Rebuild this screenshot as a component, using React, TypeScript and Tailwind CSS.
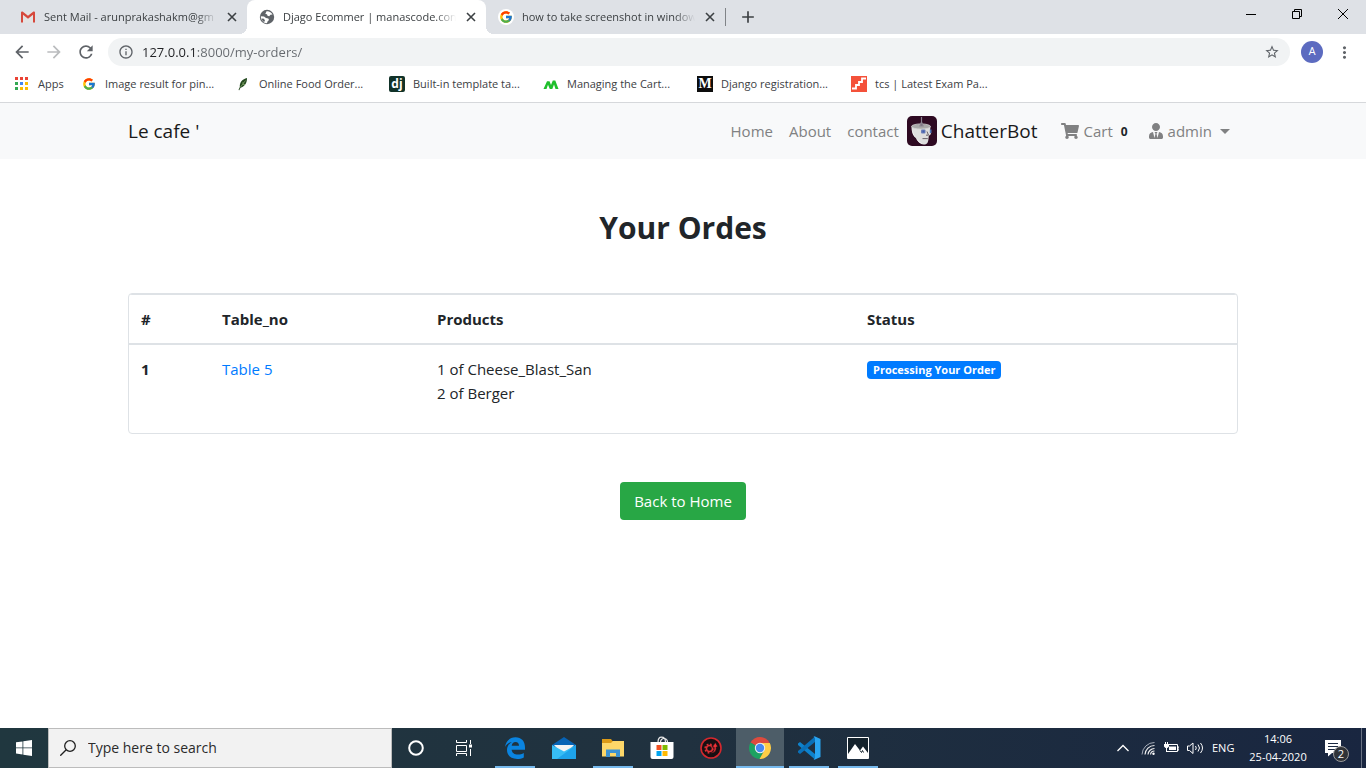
import React from "react";
import { FaShoppingCart, FaUserTie } from "react-icons/fa";
import { FcGoogle } from "react-icons/fc";
import {
  MdAdd,
  MdArrowBack,
  MdArrowForward,
  MdInfoOutline,
  MdMoreVert,
  MdRefresh,
  MdStarBorder,
} from "react-icons/md";

function GmailIcon() {
  return (
    <svg width="16" height="16" viewBox="0 0 16 16" aria-hidden="true">
      <path d="M2.5 3h11v10.500h-11z" fill="#e3e3e3" />
      <path d="M1 3.500Q1 2.500 2 2.500h.6L8 6.800l5.400-4.300h.6q1 0 1 1V13.500h-2V5.800L8 9.800 3 5.800v7.700H1z" fill="#d6483c" />
    </svg>
  );
}

function GlobeIcon() {
  return (
    <svg width="16" height="16" viewBox="0 0 16 16" aria-hidden="true">
      <circle cx="8" cy="8" r="7.200" fill="#5f6368" />
      <path d="M7.500 2.200C10 1.800 12.500 3.200 13.500 5.500l-2 .3-1.300 1.400-1.700-.4-.5-1.500-1.700-.3z" fill="#fff" />
      <path d="M1.800 7.200 5 7.400l2 1.600 2.300.4.700 1.600-1.500 1.500-.5 1.800C4.500 14 1.800 11 1.800 7.200z" fill="#fff" />
      <path d="m2.500 9.500 2.500.3 1 2-1 1.200C3.500 12 2.700 10.800 2.500 9.500z" fill="#5f6368" />
    </svg>
  );
}

function GoogleBadge() {
  return (
    <span className="flex size-4 items-center justify-center rounded-full bg-white">
      <FcGoogle size={14} />
    </span>
  );
}

function AppsGridIcon() {
  const colors = [
    ["#ea4335", "#ea4335", "#ea4335"],
    ["#34a853", "#4285f4", "#fbbc04"],
    ["#34a853", "#fbbc04", "#fbbc04"],
  ];
  return (
    <svg width="14" height="14" viewBox="0 0 14 14" aria-hidden="true">
      {colors.map((row, r) =>
        row.map((c, i) => <rect key={`${r}-${i}`} x={1 + i * 5} y={r * 5} width="3" height="3" fill={c} />)
      )}
    </svg>
  );
}

function LeafIcon() {
  return (
    <svg width="16" height="16" viewBox="0 0 16 16" aria-hidden="true">
      <path d="M12 2C7.500 3 4.500 6 4.800 11l-1.300 3 .8.300 1.200-2.600C9.500 10.500 12 7.500 12 2z" fill="#24491f" />
      <path d="M10.500 4.500 5.500 11M8 6v2.500h2" stroke="#86ad6c" strokeWidth="0.7" fill="none" />
    </svg>
  );
}

function DjangoIcon() {
  return (
    <span className="flex size-4 items-center justify-center rounded-xs bg-[#113228] pb-px text-xs leading-none font-bold text-white">
      dj
    </span>
  );
}

function PeaksIcon() {
  return (
    <svg width="16" height="16" viewBox="0 0 16 16" aria-hidden="true">
      <path d="M.5 13 4 5.200h2.500L8 9l1.800-4.600h2.500L15.500 13h-3L11 8.500 9.300 13H6.800L5 8.800 3.500 13z" fill="#1fbf2c" />
    </svg>
  );
}

function MediumIcon() {
  return (
    <span className="flex size-4 items-center justify-center bg-[#0d0d0d] font-['Liberation_Serif',serif] text-sm leading-none font-bold text-white">
      M
    </span>
  );
}

function StepsIcon() {
  return (
    <svg width="16" height="16" viewBox="0 0 16 16" aria-hidden="true">
      <path d="M0 0h16v16H0z" fill="#f4513a" />
      <path d="M1 12.500h4v-3.500h3v-3h3v-3.500h4" stroke="#fff" strokeWidth="1.800" fill="none" />
    </svg>
  );
}

function BotIcon() {
  return (
    <svg width="30" height="30" viewBox="0 0 30 30" aria-hidden="true">
      <rect width="30" height="30" rx="5" fill="#2e0a22" />
      <path d="M4.500 10.500c0 7 2.200 9.500 4.300 11.500 1.800 3.700 4.500 6.300 7.700 6.600 3.400.2 4.600-2.100 4.900-5.100l.4-3.500 2.200-2-1-3 .5-4.500z" fill="#dedede" />
      <path d="M5.500 13c.5 6 4.500 11.500 10 14.500-3.500 0-5-3-6.500-5.500C6.500 20 5 17.500 5.500 13z" fill="#f4f4f4" />
      <ellipse cx="14" cy="10.500" rx="9.500" ry="2.600" fill="#a8a8a8" stroke="#d2d2d2" strokeWidth="0.800" />
      <path d="M14.500 1v5M14.500 6l-1.500 4h3z" stroke="#8b8490" strokeWidth="1.200" fill="#77717a" />
      <rect x="14" y="13.500" width="4.500" height="4" rx="1" fill="#6d7fb8" />
      <path d="M15.500 14.500h2v2h-2z" fill="#3f5fb0" />
      <path d="M22.800 13.500h1.700v3.500h-1.700z" fill="#4d74b5" />
      <path d="m20 15.500 1.500 3.700h-2.500M15.500 22.600h5.300" stroke="#5a555e" strokeWidth="0.900" fill="none" />
    </svg>
  );
}

const tabs = [
  { title: "Sent Mail - arunprakashakm@gm", icon: <GmailIcon />, active: false },
  { title: "Djago Ecommer | manascode.con", icon: <GlobeIcon />, active: true },
  { title: "how to take screenshot in window", icon: <GoogleBadge />, active: false },
];

const bookmarks = [
  { label: "Image result for pin...", icon: <FcGoogle size={14} className="mx-px" /> },
  { label: "Online Food Order...", icon: <LeafIcon /> },
  { label: "Built-in template ta...", icon: <DjangoIcon /> },
  { label: "Managing the Cart...", icon: <PeaksIcon /> },
  { label: "Django registration...", icon: <MediumIcon /> },
  { label: "tcs | Latest Exam Pa...", icon: <StepsIcon /> },
];

function TabStrip() {
  return (
    <div className="flex h-[34px] bg-[#dee1e6] pl-2">
      {tabs.map((tab) => (
        <div
          key={tab.title}
          className={
            tab.active
              ? "relative flex w-[239px] items-center gap-2 rounded-t-lg bg-white pr-2 pl-3"
              : "flex w-[239px] items-center gap-2 pr-2 pl-3"
          }
        >
          {tab.active && (
            <>
              <span className="absolute bottom-0 -left-2 size-2 bg-[radial-gradient(circle_at_0_0,#dee1e6_8px,#ffffff_8px)]" />
              <span className="absolute -right-2 bottom-0 size-2 bg-[radial-gradient(circle_at_100%_0,#dee1e6_8px,#ffffff_8px)]" />
            </>
          )}
          <span className="shrink-0">{tab.icon}</span>
          <span className="min-w-0 flex-1 text-[11px] whitespace-nowrap text-[#3c4043] [mask-image:linear-gradient(to_right,#000_88%,transparent)]">
            {tab.title}
          </span>
          <button type="button" aria-label="Close tab" className="shrink-0 text-[#3c4043]">
            <svg width="14" height="14" viewBox="0 0 14 14" aria-hidden="true">
              <path d="m3 3 8 8M11 3l-8 8" stroke="currentColor" strokeWidth="1.600" />
            </svg>
          </button>
        </div>
      ))}
      <span className="my-2 w-px bg-[#808387]" />
      <button type="button" aria-label="New tab" className="ml-3 text-[#3c4043]">
        <MdAdd size={20} />
      </button>
      <div className="ml-auto flex h-7 text-black">
        <button type="button" aria-label="Minimize" className="flex w-[46px] items-center justify-center">
          <svg width="10" height="10" viewBox="0 0 10 10"><path d="M0 5.500h10" stroke="currentColor" /></svg>
        </button>
        <button type="button" aria-label="Restore" className="flex w-[46px] items-center justify-center">
          <svg width="10" height="10" viewBox="0 0 10 10">
            <path d="M.5 2.500h7v7h-7zM2.500 2.500v-2h7v7h-2" stroke="currentColor" fill="none" />
          </svg>
        </button>
        <button type="button" aria-label="Close" className="flex w-[46px] items-center justify-center">
          <svg width="10" height="10" viewBox="0 0 10 10"><path d="m0 0 10 10M10 0 0 10" stroke="currentColor" /></svg>
        </button>
      </div>
    </div>
  );
}

function Toolbar() {
  return (
    <div className="flex h-9 items-center bg-white px-3 text-[#5f6368]">
      <div className="flex gap-3">
        <button type="button" aria-label="Back"><MdArrowBack size={20} /></button>
        <button type="button" aria-label="Forward" className="text-[#babcbe]"><MdArrowForward size={20} /></button>
        <button type="button" aria-label="Reload"><MdRefresh size={20} /></button>
      </div>
      <div className="ml-3 flex h-7 flex-1 items-center gap-2 rounded-full bg-[#f1f3f4] px-2.5">
        <MdInfoOutline size={16} />
        <input
          aria-label="Address"
          defaultValue="127.0.0.1:8000/my-orders/"
          className="min-w-0 flex-1 bg-[linear-gradient(to_right,#202124_54px,#65696e_54px)] bg-clip-text text-[13px] leading-5 text-transparent outline-none"
        />
        <button type="button" aria-label="Bookmark this page"><MdStarBorder size={16} /></button>
      </div>
      <button
        type="button"
        aria-label="Profile"
        className="ml-[11px] size-[22px] rounded-full bg-[#5c6bc0] font-[Roboto,sans-serif] text-[11px] text-white"
      >
        A
      </button>
      <button type="button" aria-label="Menu" className="ml-3"><MdMoreVert size={19} /></button>
    </div>
  );
}

function BookmarksBar() {
  return (
    <div className="flex h-[33px] items-center overflow-hidden border-b border-[#d6d8db] bg-white pb-1 pl-3.5 text-[11px] text-[#3c4043]">
      <a href="#apps" className="flex w-[67px] items-center gap-2.5">
        <AppsGridIcon />
        Apps
      </a>
      {bookmarks.map((b) => (
        <a key={b.label} href="#bookmark" className="flex w-[154px] shrink-0 items-center gap-2 whitespace-nowrap">
          <span className="shrink-0">{b.icon}</span>
          {b.label}
        </a>
      ))}
    </div>
  );
}

function SiteNav() {
  return (
    <nav className="bg-[#f8f9fa]">
      <div className="mx-auto flex h-14 max-w-[1140px] items-center px-[15px]">
        <a href="#home" className="text-[19px] text-[#1a1a1a]">Le cafe '</a>
        <div className="ml-auto flex items-center text-[15px] text-[#808182]">
          <a href="#home" className="px-2">Home</a>
          <a href="#about" className="px-2">About</a>
          <a href="#contact" className="px-2">contact</a>
          <a href="#chatterbot" className="mr-4 flex items-center gap-1 text-[19px] text-[#1a1a1a]">
            <BotIcon />
            ChatterBot
          </a>
          <a href="#cart" className="flex items-center gap-1 px-2">
            <FaShoppingCart size={18} />
            Cart
            <span className="px-1 pt-px text-xs font-bold text-[#212529]">0</span>
          </a>
          <button type="button" className="flex items-center gap-1 px-2">
            <FaUserTie size={16} />
            admin
            <span className="ml-1 border-x-5 border-t-5 border-x-transparent border-t-current" />
          </button>
        </div>
      </div>
    </nav>
  );
}

function Orders() {
  return (
    <main className="mx-auto w-full max-w-[1140px] flex-1 px-[15px] pt-12 text-[15px] leading-6 text-[#212529]">
      <h1 className="text-center text-[30px] leading-[42px] font-bold">Your Ordes</h1>
      <div className="mt-11 overflow-hidden rounded border border-[#dee2e6]">
        <table className="w-full table-fixed border-collapse text-left">
          <colgroup>
            <col className="w-[81px]" />
            <col className="w-[215px]" />
            <col className="w-[430px]" />
            <col />
          </colgroup>
          <thead>
            <tr className="border-t border-b-2 border-[#dee2e6]">
              <th scope="col" className="p-3 font-bold">#</th>
              <th scope="col" className="p-3 font-bold">Table_no</th>
              <th scope="col" className="p-3 font-bold">Products</th>
              <th scope="col" className="p-3 font-bold">Status</th>
            </tr>
          </thead>
          <tbody>
            <tr className="align-top">
              <th scope="row" className="p-3 font-bold">1</th>
              <td className="p-3"><a href="#table" className="text-[#007bff]">Table 5</a></td>
              <td className="p-3 pb-7">
                <p>1 of Cheese_Blast_San</p>
                <p>2 of Berger</p>
              </td>
              <td className="p-3">
                <span className="mt-1 inline-block rounded bg-[#007bff] px-1.5 align-top text-[11px] leading-[18px] font-bold whitespace-nowrap text-white">
                  Processing Your Order
                </span>
              </td>
            </tr>
          </tbody>
        </table>
      </div>
      <div className="mt-12 text-center">
        <a href="#home" className="inline-block rounded bg-[#28a745] px-3.5 py-[7px] text-white">Back to Home</a>
      </div>
    </main>
  );
}

function EdgeIcon() {
  return (
    <svg width="22" height="22" viewBox="0 0 22 22" aria-hidden="true">
      <path
        d="M1 10C2 4 6 .3 11.500.3 17.500.3 21 4.500 21 10.500v2.200H7.600c.3 3.200 3 4.800 6.200 4.800 2.300 0 4.300-.6 6-1.600v4.500c-2 1-4.200 1.500-6.600 1.500C7 21.900 3 18.300 3 13c0-3.500 2-6.500 5-8C5 5.500 2.500 7.200 1 10zm6.700-1.200H15c0-2.300-1.200-3.800-3.500-3.800-2.100 0-3.500 1.500-3.800 3.800z"
        fill="#0a84e0"
      />
    </svg>
  );
}

function MailIcon() {
  return (
    <svg width="24" height="22" viewBox="0 0 24 22" aria-hidden="true">
      <path d="M0 8 12 0l12 8v2H0z" fill="#0763b5" />
      <path d="M2 8h20l-7 8H9z" fill="#f3f3f3" />
      <path d="M0 8 12 14.500 24 8V22H0z" fill="#37bdf5" />
      <path d="M24 8 5 22h19z" fill="#1ea3ea" />
    </svg>
  );
}

function FolderIcon() {
  return (
    <svg width="22" height="20" viewBox="0 0 22 20" aria-hidden="true">
      <path d="M0 1h9l1.500 2H21v14H0z" fill="#dc9a17" />
      <path d="M0 5h9l2-2h11v15.500H0z" fill="#fdd769" />
      <path d="M4 19v-7.500h14V19h-4v-4H8v4z" fill="#3d93d3" />
    </svg>
  );
}

function StoreIcon() {
  return (
    <svg width="24" height="24" viewBox="0 0 24 24" aria-hidden="true">
      <path d="M8 6.500C8 3 9.500 1.200 11.500 1.200S15.500 3 15.500 6.500M10.500 6.500c0-2.500 1.500-4 3.500-4s3.500 1.500 3.500 4" fill="none" stroke="#e8e8e8" strokeWidth="1.200" />
      <path d="M.5 6h23v15q0 2-2 2h-19q-2 0-2-2z" fill="#fff" />
      <path d="M6.500 9h5v5h-5z" fill="#f25022" />
      <path d="M12.500 9h5v5h-5z" fill="#7fba00" />
      <path d="M6.500 15h5v5h-5z" fill="#00a4ef" />
      <path d="M12.500 15h5v5h-5z" fill="#ffb900" />
    </svg>
  );
}

function RedGearIcon() {
  return (
    <svg width="22" height="22" viewBox="0 0 22 22" aria-hidden="true">
      <circle cx="11" cy="11" r="10" fill="#170f12" stroke="#d5282e" strokeWidth="1.600" />
      <circle cx="9.500" cy="11.500" r="3" fill="none" stroke="#dd3035" strokeWidth="1.500" />
      <circle cx="9.500" cy="11.500" r="4.400" fill="none" stroke="#dd3035" strokeWidth="1.500" strokeDasharray="1.800 1.650" />
      <path d="M10.500 16c3-.5 4-3 3.500-6h-2l3.500-4.500L18 10h-1.800c.5 4-1.700 6.500-5.700 6z" fill="#ed3035" stroke="#170f12" strokeWidth="0.700" />
    </svg>
  );
}

function ChromeIcon() {
  return (
    <svg width="22" height="22" viewBox="0 0 22 22" aria-hidden="true">
      <path d="M11 11 1.500 5.500A11 11 0 0 1 20.500 5.500z" fill="#dd4b3e" />
      <path d="M11 11 1.500 5.500A11 11 0 0 0 10.500 22l4.800-8.500z" fill="#1da261" />
      <path d="M11 6h9.800A11 11 0 0 1 10.500 22l4.800-8.500z" fill="#ffcd46" />
      <circle cx="11" cy="11" r="5.200" fill="#f1f1f1" />
      <circle cx="11" cy="11" r="4.200" fill="#4688f1" />
    </svg>
  );
}

function CodeIcon() {
  return (
    <svg width="24" height="24" viewBox="0 0 24 24" aria-hidden="true">
      <path d="m1 7.500 2-1.500 15 12v5.500L1 9z" fill="#0e82cc" />
      <path d="m1 16.500 2 1.500L18 6V.5L1 15z" fill="#0a70b8" />
      <path d="M17.500.3 23.500 3v18l-6 2.700-1-.6q1.500 0 1.500-1.600v-19q0-1.500-1.500-1.600z" fill="#29a5f2" />
    </svg>
  );
}

function PhotosIcon() {
  return (
    <svg width="22" height="22" viewBox="0 0 22 22" aria-hidden="true">
      <path d="M.5.500h21v21H.5z" fill="#14222c" stroke="#fff" />
      <path d="M1 17 8 7l5 6.500 3-4L21 16v5H1z" fill="#fff" />
      <path d="m13 13.500 1.500 2 1-2 1 2" stroke="#14222c" fill="none" />
    </svg>
  );
}

const apps = [
  { name: "Edge", icon: <EdgeIcon />, open: true, current: false },
  { name: "Mail", icon: <MailIcon />, open: false, current: false },
  { name: "File Explorer", icon: <FolderIcon />, open: true, current: false },
  { name: "Store", icon: <StoreIcon />, open: false, current: false },
  { name: "Gear", icon: <RedGearIcon />, open: false, current: false },
  { name: "Chrome", icon: <ChromeIcon />, open: true, current: true },
  { name: "Code", icon: <CodeIcon />, open: true, current: false },
  { name: "Photos", icon: <PhotosIcon />, open: true, current: false },
];

function Taskbar() {
  return (
    <footer className="flex h-10 shrink-0 bg-linear-to-r from-[#20373f] via-[#20313f] to-[#192640] text-white">
      <button type="button" aria-label="Start" className="flex w-12 items-center justify-center">
        <svg width="16" height="16" viewBox="0 0 16 16">
          <path d="m0 2.300 6.500-.9v6.100H0zM7.300 1.300 16 0v7.500H7.300zM0 8.300h6.500v6.200L0 13.600zM7.300 8.300H16V16l-8.700-1.300z" fill="#fff" />
        </svg>
      </button>
      <label className="flex w-[344px] items-center gap-3 border border-[#bcbcbc] bg-[#f2f2f2] pl-[11px] text-[#202020]">
        <svg width="16" height="16" viewBox="0 0 16 16" className="shrink-0" aria-hidden="true">
          <circle cx="10" cy="6" r="5.300" fill="none" stroke="currentColor" strokeWidth="1.300" />
          <path d="M6.200 9.800.3 15.700" stroke="currentColor" strokeWidth="1.300" />
        </svg>
        <input
          aria-label="Search"
          placeholder="Type here to search"
          className="min-w-0 flex-1 bg-transparent text-sm outline-none placeholder:text-[#2b2b2b]"
        />
      </label>
      <button type="button" aria-label="Cortana" className="flex w-12 items-center justify-center">
        <svg width="16" height="16" viewBox="0 0 16 16"><circle cx="8" cy="8" r="6.800" fill="none" stroke="#fff" strokeWidth="2" /></svg>
      </button>
      <button type="button" aria-label="Task view" className="flex w-12 items-center justify-center">
        <svg width="16" height="16" viewBox="0 0 16 16">
          <path d="M.5 0v2.500h10V0M.5 16v-2.500h10V16M.5 5.500h10v6H.5zM14.500 0v4M14.500 9v7" stroke="#fff" fill="none" />
          <path d="M13 4.500h3v3h-3z" fill="#fff" />
        </svg>
      </button>
      <div className="ml-[3px] flex gap-px">
        {apps.map((app) => (
          <button
            key={app.name}
            type="button"
            aria-label={app.name}
            className={
              app.current
                ? "flex w-12 flex-col items-center bg-[#4d5d68]"
                : "flex w-12 flex-col items-center"
            }
          >
            <span className="flex flex-1 items-center pt-0.5">{app.icon}</span>
            <span className={app.current ? "h-0.5 w-12 bg-[#76b9ed]" : app.open ? "h-0.5 w-10 bg-[#76b9ed]" : "h-0.5 w-10"} />
          </button>
        ))}
      </div>
      <div className="ml-auto flex items-center gap-2 text-[11px]">
        <svg width="12" height="8" viewBox="0 0 12 8" aria-hidden="true" className="mr-1">
          <path d="m.5 7 5.500-5.500L11.500 7" stroke="#fff" strokeWidth="1.300" fill="none" />
        </svg>
        <svg width="14" height="14" viewBox="0 0 14 14" aria-hidden="true">
          <path d="M4 13.500A9.500 9.500 0 0 1 13.500 4.500M7 13.500A6.500 6.500 0 0 1 13.500 7.500M9.500 13.500A4 4 0 0 1 13.500 10" stroke="#f0f0f0" strokeWidth="1.200" fill="none" />
          <path d="M1 13.500A12.500 12.500 0 0 1 13.500 1.500" stroke="#a5acb8" fill="none" />
          <circle cx="12.500" cy="12.700" r="1.200" fill="#fff" />
        </svg>
        <svg width="16" height="14" viewBox="0 0 16 14" aria-hidden="true">
          <path d="M5.500 3.500h9v7h-11V8M15 6h1v3h-1" stroke="#fff" fill="none" />
          <path d="M6 5.500h7V9H6zM1 3h5v2.500L4.500 7h-2L1 5.500z" fill="#fff" />
          <path d="M2.500 1v2M4.500 1v2M3.500 7v4" stroke="#fff" />
        </svg>
        <svg width="17" height="14" viewBox="0 0 17 14" aria-hidden="true">
          <path d="M.5 5v4.500h2l3.500 3v-10.500L2.500 5zM8.500 5q1.500 2 0 4M11 3.500q3 3.500 0 7M13.500 2q4 5 0 10" stroke="#fff" fill="none" />
        </svg>
        <span className="w-6">ENG</span>
        <time className="w-[68px] text-center leading-[18px]">
          <span className="block">14:06</span>
          <span className="block">25-04-2020</span>
        </time>
        <button type="button" aria-label="Notifications" className="relative ml-[5px] w-7">
          <svg width="17" height="17" viewBox="0 0 17 17" aria-hidden="true">
            <path d="M0 0h16v13H7l-4 3.500V13H0z" fill="#fff" />
            <path d="M3 3.500h10M3 6.500h10M3 9.500h7" stroke="#1b2942" />
          </svg>
          <span className="absolute top-1.5 left-2 flex size-4 items-center justify-center rounded-full border border-[#9b9b9b] bg-[#303338] text-[11px] leading-none">
            2
          </span>
        </button>
        <span className="mr-1 h-10 w-px bg-[#697283]" />
      </div>
    </footer>
  );
}

export default function App() {
  return (
    <div className="flex min-h-screen flex-col bg-white font-['Open_Sans','Noto_Sans',sans-serif]">
      <header>
        <TabStrip />
        <Toolbar />
        <BookmarksBar />
      </header>
      <SiteNav />
      <Orders />
      <Taskbar />
    </div>
  );
}
